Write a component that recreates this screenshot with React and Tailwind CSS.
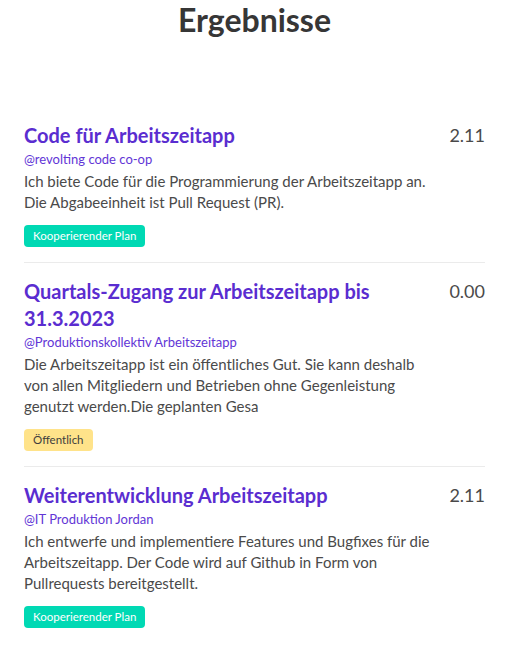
import React from 'react';

const results = [
    {
        title: 'Code für Arbeitszeitapp',
        handle: '@revolting code co-op',
        text: 'Ich biete Code für die Programmierung der Arbeitszeitapp an. Die Abgabeeinheit ist Pull Request (PR).',
        price: '2.11',
        tag: 'Kooperierender Plan',
        tagClass: 'bg-[#00d9b4] text-white',
    },
    {
        title: 'Quartals-Zugang zur Arbeitszeitapp bis 31.3.2023',
        handle: '@Produktionskollektiv Arbeitszeitapp',
        text: 'Die Arbeitszeitapp ist ein öffentliches Gut. Sie kann deshalb von allen Mitgliedern und Betrieben ohne Gegenleistung genutzt werden.Die geplanten Gesa',
        price: '0.00',
        tag: 'Öffentlich',
        tagClass: 'bg-[#ffe38a] text-[#3d3d3d]',
    },
    {
        title: 'Weiterentwicklung Arbeitszeitapp',
        handle: '@IT Produktion Jordan',
        text: 'Ich entwerfe und implementiere Features und Bugfixes für die Arbeitszeitapp. Der Code wird auf Github in Form von Pullrequests bereitgestellt.',
        price: '2.11',
        tag: 'Kooperierender Plan',
        tagClass: 'bg-[#00d9b4] text-white',
    },
];

function ResultCard({ item, last }) {
    return (
        <div className={`flex justify-between pt-[15px] pb-[15px] ${last ? '' : 'border-b border-[#ebebeb]'}`}>
            <div className="w-[418px]">
                <h2 className="text-[20px] leading-[27px] font-bold text-[#5a2dd0]">{item.title}</h2>
                <p className="mb-[2px] text-[13px] leading-[20px] text-[#6236d6]">{item.handle}</p>
                <p className="text-[15px] leading-[21px] text-[#4a4a4a]">{item.text}</p>
                <div className="mt-3 flex">
                    <span className={`flex items-center h-[22px] px-[9px] rounded-[4px] text-[11.5px] ${item.tagClass}`}>
                        {item.tag}
                    </span>
                </div>
            </div>
            <div className="text-[18px] leading-[27px] text-[#4a4a4a]">{item.price}</div>
        </div>
    );
}

export default function App() {
    return (
        <div className="bg-white min-h-screen font-['Lato',sans-serif]">
            <div className="ml-6 w-[461px]">
                <h1 className="text-center text-[32px] leading-[40px] font-bold text-[#363636]">Ergebnisse</h1>
                <div className="mt-[67px]">
                    {results.map((item, i) => (
                        <ResultCard key={i} item={item} last={i === results.length - 1} />
                    ))}
                </div>
            </div>
        </div>
    );
}
